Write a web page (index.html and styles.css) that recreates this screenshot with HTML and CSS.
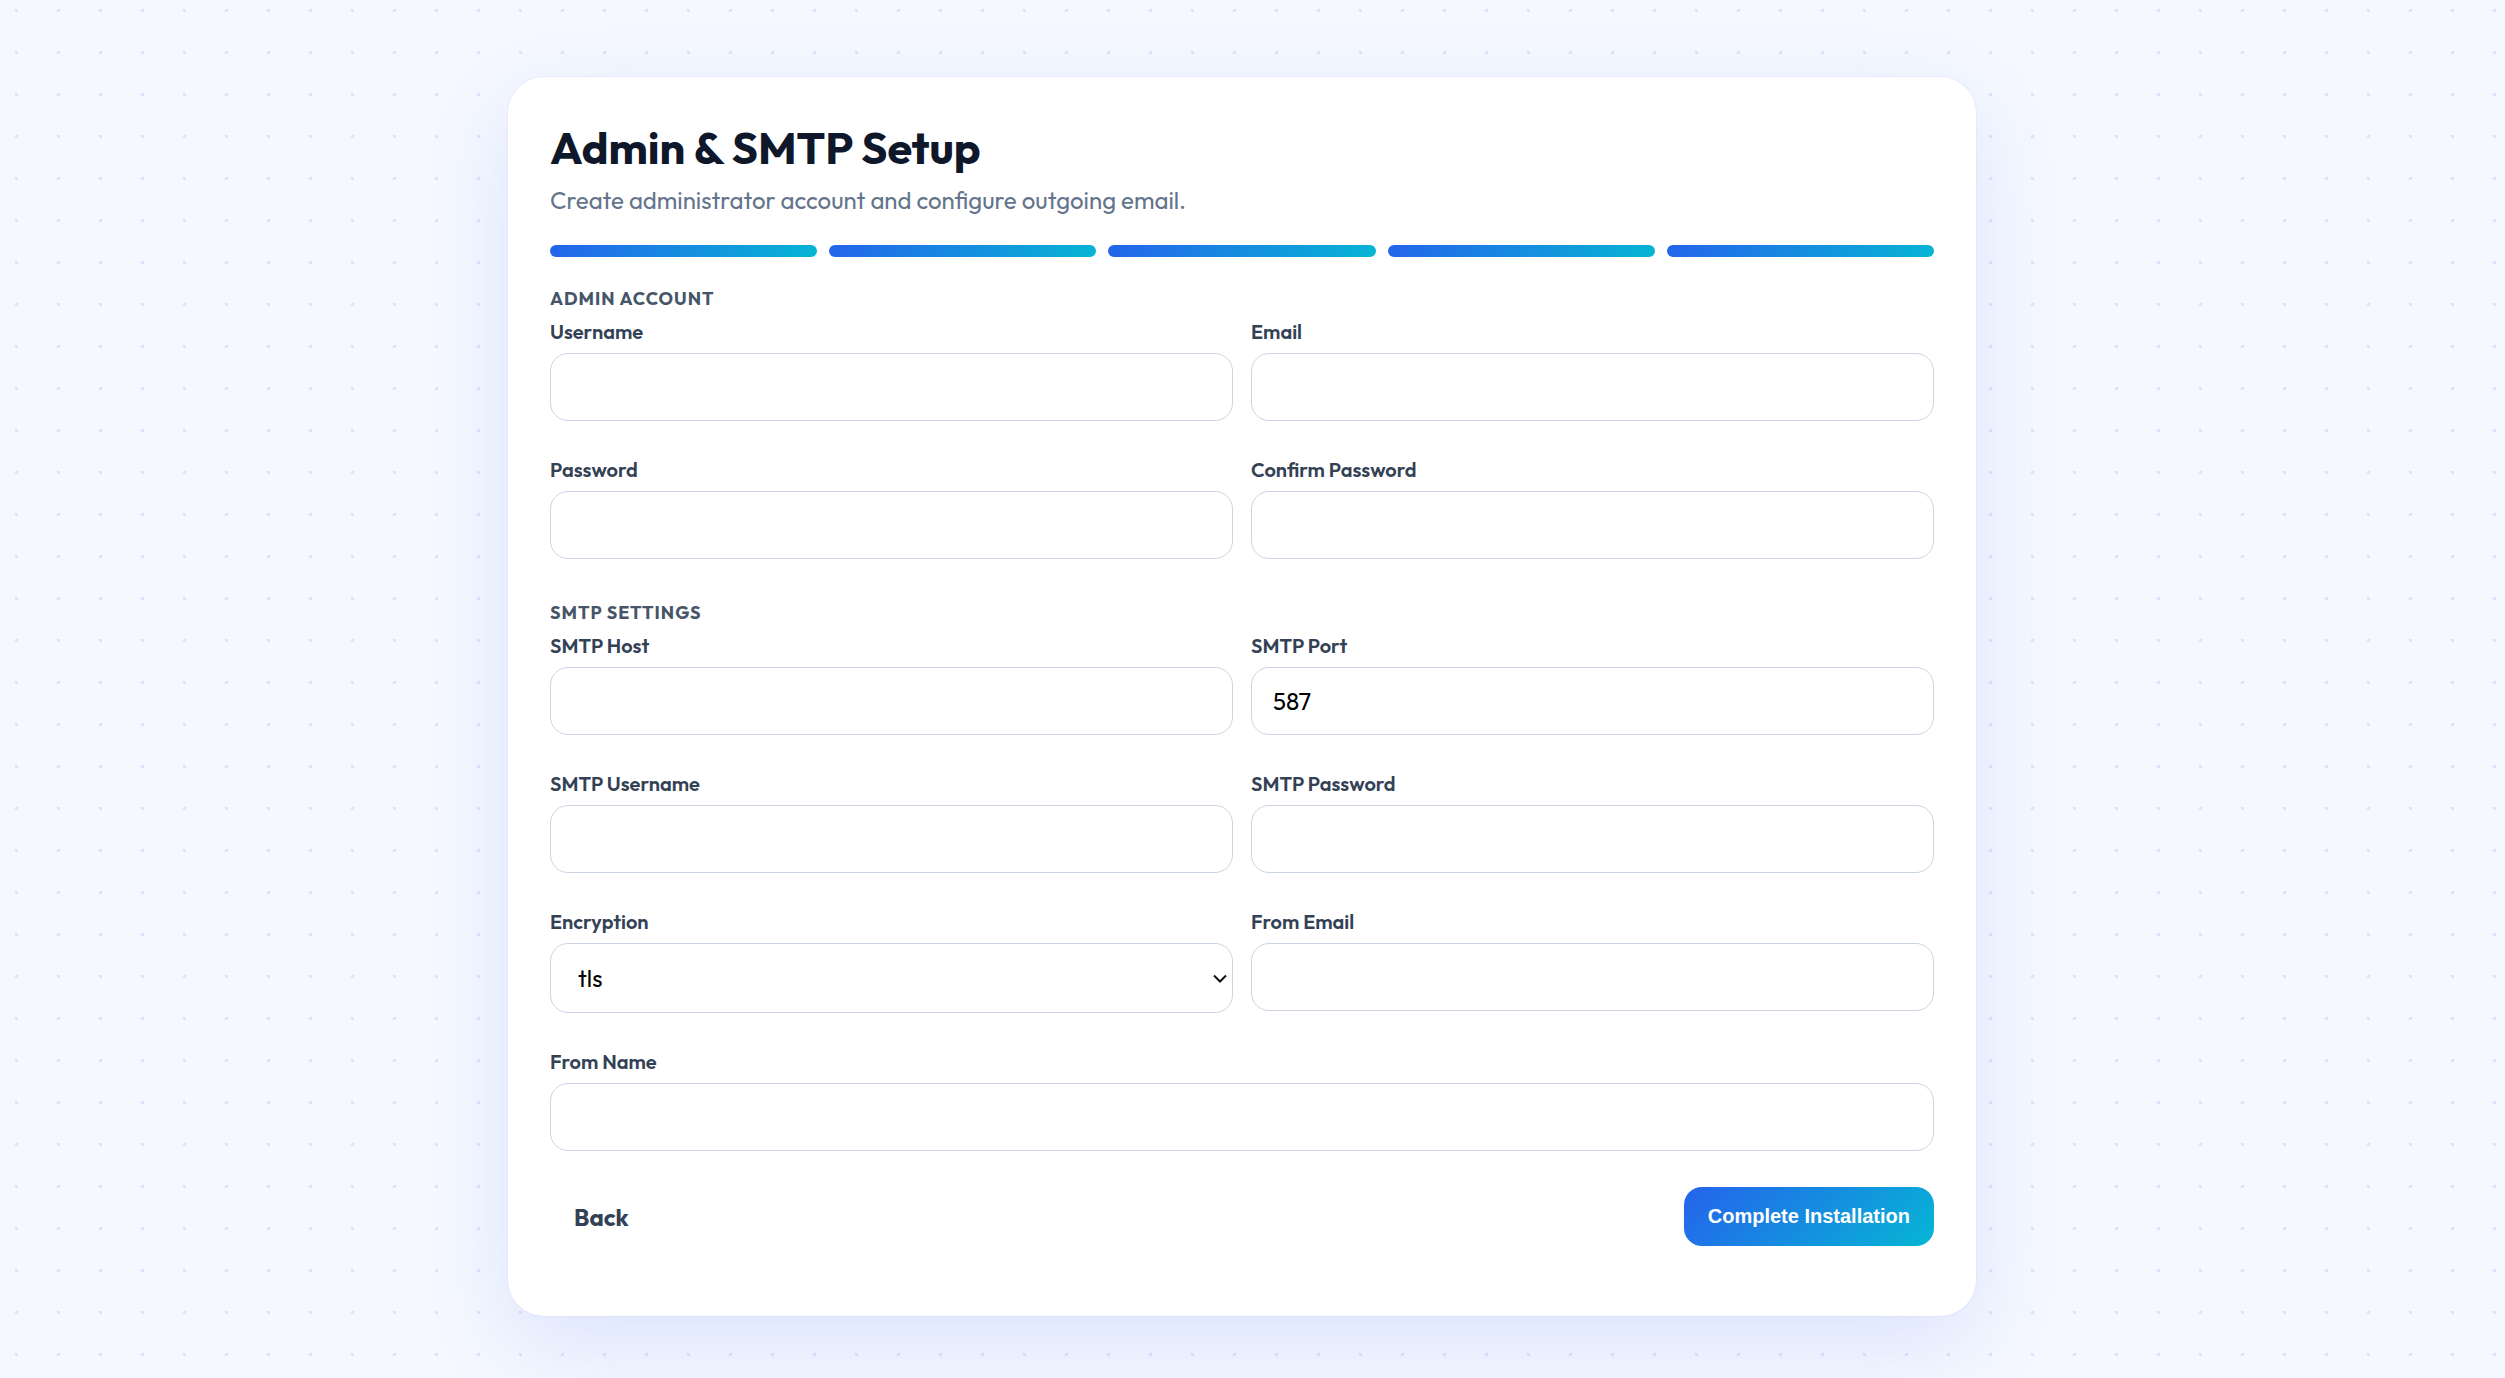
FILE: index.html
```html
<!DOCTYPE html>
<html lang="en">
<head>
<meta charset="utf-8">
<meta name="viewport" content="width=device-width, initial-scale=1">
<title>Admin &amp; SMTP Setup</title>
<link rel="stylesheet" href="styles.css">
</head>
<body>
<main class="card">
  <h1 class="title">Admin &amp; SMTP Setup</h1>
  <p class="subtitle">Create administrator account and configure outgoing email.</p>
  <div class="steps">
    <span class="step"></span><span class="step"></span><span class="step"></span><span class="step"></span><span class="step"></span>
  </div>
  <form>
    <h2 class="section">Admin Account</h2>
    <div class="grid">
      <div class="field"><label for="username">Username</label><input id="username" type="text"></div>
      <div class="field"><label for="email">Email</label><input id="email" type="email"></div>
      <div class="field"><label for="password">Password</label><input id="password" type="password"></div>
      <div class="field"><label for="confirm">Confirm Password</label><input id="confirm" type="password"></div>
    </div>
    <h2 class="section">SMTP Settings</h2>
    <div class="grid">
      <div class="field"><label for="host">SMTP Host</label><input id="host" type="text"></div>
      <div class="field"><label for="port">SMTP Port</label><input id="port" type="text" value="587"></div>
      <div class="field"><label for="smtp-user">SMTP Username</label><input id="smtp-user" type="text"></div>
      <div class="field"><label for="smtp-pass">SMTP Password</label><input id="smtp-pass" type="password"></div>
      <div class="field">
        <label for="encryption">Encryption</label>
        <div class="select">
          <select id="encryption"><option>tls</option><option>ssl</option><option>none</option></select>
          <svg class="chevron" viewBox="0 0 14 9" aria-hidden="true"><path d="M1 1.500 7 7.500l6-6"/></svg>
        </div>
      </div>
      <div class="field"><label for="from-email">From Email</label><input id="from-email" type="email"></div>
      <div class="field wide"><label for="from-name">From Name</label><input id="from-name" type="text"></div>
    </div>
    <div class="actions">
      <a class="back" href="#">Back</a>
      <button class="submit" type="submit">Complete Installation</button>
    </div>
  </form>
</main>
</body>
</html>
```
FILE: styles.css
```css
* { box-sizing: border-box; }

body {
  margin: 0;
  min-height: 100vh;
  padding: 77px 21px 62px 0;
  font-family: Outfit, Lato, sans-serif;
  font-size: 24px;
  line-height: 30px;
  color: #0f172a;
  background: #f5f8ff url("data:image/svg+xml,%3Csvg xmlns='http://www.w3.org/2000/svg' width='42' height='42'%3E%3Crect x='15' y='9' width='3' height='3' fill='%23dbe4ff'/%3E%3C/svg%3E");
}

.card {
  width: 100%;
  max-width: 1468px;
  margin: 0 auto;
  padding: 42px 42px 70px;
  border-radius: 36px;
  background: #fff;
  box-shadow: 0 0 0 1px rgba(99, 102, 241, 0.06), 0 30px 90px rgba(50, 90, 235, 0.12);
}

.title {
  margin: 0;
  font-size: 45px;
  line-height: 58px;
  font-weight: 700;
}

.subtitle {
  margin: 8px 0 0;
  color: #64748b;
}

.steps {
  display: flex;
  gap: 12px;
  margin: 30px 0;
}

.step {
  flex: 1;
  height: 12px;
  border-radius: 6px;
  background: linear-gradient(135deg, #2563eb, #06b6d4);
}

.section {
  margin: 0 0 8px;
  font-size: 18px;
  line-height: 24px;
  font-weight: 700;
  letter-spacing: 1px;
  text-transform: uppercase;
  color: #475569;
}

.grid {
  display: grid;
  grid-template-columns: 1fr 1fr;
  column-gap: 18px;
}

.grid + .section { margin-top: 6px; }

.field { padding-bottom: 36px; }
.wide { grid-column: 1 / -1; }

label {
  display: block;
  margin-bottom: 8px;
  font-size: 20px;
  line-height: 26px;
  font-weight: 600;
  color: #334155;
}

input,
select {
  display: block;
  width: 100%;
  height: 68px;
  padding: 0 21px;
  border: 1px solid #cbd5e1;
  border-radius: 18px;
  background: #fff;
  font: inherit;
  color: #000;
}

.select { display: grid; align-items: center; }
.select > * { grid-area: 1 / 1; }

select {
  height: 70px;
  padding: 0 27px;
  appearance: none;
}

.chevron {
  justify-self: end;
  width: 14px;
  height: 9px;
  margin-right: 6px;
  fill: none;
  stroke: #111;
  stroke-width: 2;
  pointer-events: none;
}

.actions {
  display: flex;
  justify-content: space-between;
  align-items: center;
}

.back {
  padding: 0 24px;
  font-weight: 700;
  color: #334155;
  text-decoration: none;
}

.submit {
  height: 59px;
  padding: 0 24px;
  border: 0;
  border-radius: 18px;
  background: linear-gradient(135deg, #2563eb, #06b6d4);
  font: 700 20px "Liberation Sans", Arial, sans-serif;
  color: #fff;
}
```
